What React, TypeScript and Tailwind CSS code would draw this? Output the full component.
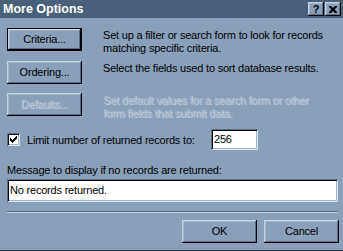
const FACE = 'bg-[#8a9fb8]'
const RAISED =
  'shadow-[inset_-1px_-1px_0_#000,inset_1px_1px_0_#c6d3e0,inset_-2px_-2px_0_#5b6e86,inset_2px_2px_0_#a3b5c9]'
const SUNKEN =
  'shadow-[inset_1px_1px_0_#5b6e86,inset_-1px_-1px_0_#dce5ee,inset_2px_2px_0_#000,inset_-2px_-2px_0_#a3b5c9]'
const DISABLED = 'text-[#aab9cb] [text-shadow:1px_1px_0_#c2cedb]'

function Btn({ label, primary, disabled }: { label: string; primary?: boolean; disabled?: boolean }) {
  return (
    <button
      className={`w-[75px] h-[23px] shrink-0 ${FACE} ${primary ? 'border border-black' : ''} flex items-center justify-center`}
    >
      <span
        className={`w-full h-full flex items-center justify-center ${RAISED} ${disabled ? DISABLED : 'text-black'}`}
      >
        {label}
      </span>
    </button>
  )
}

function CapBtn({ children }: { children: React.ReactNode }) {
  return (
    <div className={`w-[16px] h-[14px] ${FACE} ${RAISED} flex items-center justify-center`}>{children}</div>
  )
}

function Row({
  label,
  text,
  primary,
  disabled,
  className,
}: {
  label: string
  text: string[]
  primary?: boolean
  disabled?: boolean
  className: string
}) {
  return (
    <div className={`flex items-start gap-[21px] h-[23px] ${className}`}>
      <Btn label={label} primary={primary} disabled={disabled} />
      <div className={`mt-[1px] leading-[13px] ${disabled ? DISABLED : 'text-black'}`}>
        {text.map(t => (
          <div key={t}>{t}</div>
        ))}
      </div>
    </div>
  )
}

export default function App() {
  return (
    <div
      className={`w-[343px] h-[251px] ${FACE} flex flex-col text-[11px] tracking-[-0.2px] border-b border-[#2d3a49] overflow-hidden`}
      style={{ fontFamily: '"Liberation Sans", Arial, sans-serif' }}
    >
      {/* title bar */}
      <div className="h-[18px] bg-[#4a5f78] flex items-center justify-between pl-[3px] pr-[2px] shrink-0">
        <span className="text-white font-bold text-[12.5px] tracking-[0px]">More Options</span>
        <div className="flex">
          <CapBtn>
            <span className="font-bold text-[11px] leading-none text-black">?</span>
          </CapBtn>
          <div className="w-[1px]" />
          <CapBtn>
            <svg width="8" height="7" viewBox="0 0 8 7">
              <path d="M0 0h2l2 2 2-2h2v1L5.5 3.5 8 6v1H6L4 5 2 7H0V6l2.5-2.5L0 1z" fill="#000" />
            </svg>
          </CapBtn>
        </div>
      </div>

      <div className="flex flex-col pl-[7px] pr-[5px]">
        <Row
          className="mt-[10px]"
          label="Criteria..."
          primary
          text={['Set up a filter or search form to look for records', 'matching specific criteria.']}
        />
        <Row
          className="mt-[10px]"
          label="Ordering..."
          text={['Select the fields used to sort database results.']}
        />
        <Row
          className="mt-[9px]"
          label="Defaults..."
          disabled
          text={['Set default values for a search form or other', 'form fields that submit data.']}
        />

        {/* limit */}
        <div className="flex items-center mt-[13px] h-[21px]">
          <div className={`w-[13px] h-[13px] bg-white ${SUNKEN} flex items-center justify-center`}>
            <svg width="7" height="7" viewBox="0 0 7 7">
              <path d="M0 2h1v1h1v1h1V3h1V2h1V1h1V0h1v3h-1v1h-1v1h-1v1H3v1H2V6H1V5H0z" fill="#000" />
            </svg>
          </div>
          <span className="ml-[7px] mt-[1px] w-[184px]">Limit number of returned records to:</span>
          <div className={`w-[47px] h-[21px] bg-white ${SUNKEN} flex items-center pl-[3px]`}>256</div>
        </div>

        <div className="mt-[14px] leading-[13px]">Message to display if no records are returned:</div>
        <div className={`mt-[2px] h-[23px] bg-white ${SUNKEN} flex items-center pl-[3px]`}>
          No records returned.
        </div>

        <div className="mt-[9px] h-[2px] border-t border-[#5b6e86] border-b border-b-[#c6d3e0]" />

        <div className="flex justify-end gap-[7px] mt-[7px] -mr-[1px]">
          <Btn label="OK" />
          <Btn label="Cancel" />
        </div>
      </div>
    </div>
  )
}
